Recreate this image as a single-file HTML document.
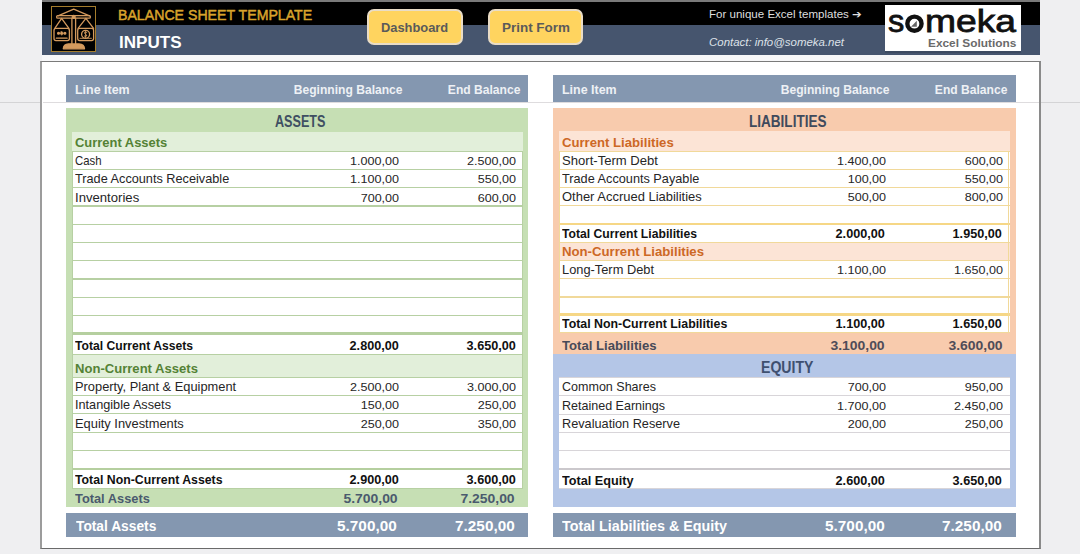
<!DOCTYPE html>
<html><head><meta charset="utf-8"><style>
html,body{margin:0;padding:0;}
body{width:1080px;height:554px;position:relative;overflow:hidden;background:#efeff1;font-family:"Liberation Sans", sans-serif;}
.t{position:absolute;white-space:pre;line-height:1;}
</style></head><body>
<div style="position:absolute;left:0.00px;top:101.50px;width:41.50px;height:1.00px;background:#d4d4d6;"></div>
<div style="position:absolute;left:1040.50px;top:101.50px;width:39.50px;height:1.00px;background:#d4d4d6;"></div>
<div style="position:absolute;left:41.50px;top:0.00px;width:998.50px;height:1.50px;background:#7a7a7a;"></div>
<div style="position:absolute;left:41.50px;top:1.50px;width:998.50px;height:23.70px;background:#000000;"></div>
<div style="position:absolute;left:41.50px;top:25.20px;width:998.50px;height:29.60px;background:#46556e;"></div>
<div style="position:absolute;left:41.50px;top:54.80px;width:998.50px;height:6.20px;background:#f7f7f8;"></div>
<div style="position:absolute;left:40.20px;top:61.00px;width:1001.30px;height:488.40px;background:#ffffff;border-left:2.5px solid #9c9c9c;border-right:2px solid #8a8a8a;border-top:1.5px solid #7a7a7a;border-bottom:1.8px solid #6a6a6a;box-sizing:border-box;"></div>
<div style="position:absolute;left:42.70px;top:101.60px;width:996.80px;height:1.20px;background:#dedcde;"></div>
<div style="position:absolute;left:50.5px;top:6px;width:45.5px;height:45.5px;box-sizing:border-box;border:1.3px solid #a57d2c;background:#000"></div>
<svg style="position:absolute;left:46px;top:2px" width="56" height="54" viewBox="0 0 56 54" fill="none" stroke="#d39a5e" stroke-width="1.3" stroke-linejoin="round" stroke-linecap="round">
<path d="M12 13.8 L27.7 7.2 L43.5 13.8"/>
<rect x="10.6" y="13.6" width="33.8" height="2.6" rx="1.2"/>
<circle cx="27.7" cy="14.9" r="1.5" fill="#d39a5e"/>
<path d="M25.9 16.5 L25.9 42 M29.6 16.5 L29.6 42"/>
<path d="M17.3 46.8 Q17.5 42.2 22.5 42 L33 42 Q38.3 42.2 38.5 46.8 Z" fill="#d39a5e"/>
<path d="M15.6 16.4 L8.8 26.4 M15.6 16.4 L22.9 26.4"/>
<path d="M39.9 16.4 L32.1 26.4 M39.9 16.4 L47.6 26.4"/>
<rect x="8" y="26.4" width="15.4" height="12.2" rx="2"/>
<rect x="31.7" y="26.4" width="15.9" height="12.2" rx="2"/>
<path d="M10.3 36.2 L21.1 36.2"/>
<circle cx="12.5" cy="31.3" r="0.9" fill="#d39a5e"/>
<circle cx="18.9" cy="31.3" r="0.9" fill="#d39a5e"/>
<path d="M15.7 29.3 L17.5 31.3 L15.7 33.3 L13.9 31.3 Z" fill="#d39a5e" stroke-width="0.6"/>
<circle cx="39.6" cy="32.3" r="4" />
<path d="M40.8 30.4 Q39.6 29.6 38.6 30.4 Q38 31.5 39.6 32.2 Q41.2 32.9 40.6 34 Q39.6 34.9 38.4 34.1 M39.6 29 L39.6 35.5" stroke-width="0.9"/>
<path d="M33.9 36.3 L45.4 36.3" stroke-width="0.9"/>
</svg>
<div class="t" style="left:118.30px;transform-origin:0 0;top:7.20px;font-size:15.3px;font-weight:400;font-style:normal;color:#d9a42c;transform:scaleX(0.9248);-webkit-text-stroke:0.5px #d9a42c;">BALANCE SHEET TEMPLATE</div>
<div class="t" style="left:119.20px;transform-origin:0 0;top:34.30px;font-size:17.2px;font-weight:700;font-style:normal;color:#ffffff;transform:scaleX(0.9916);">INPUTS</div>
<div style="position:absolute;left:366.9px;top:9.3px;width:96.0px;height:35.4px;box-sizing:border-box;border:2px solid #e9dcc6;border-radius:7px;background:#ffd45f"></div>
<div class="t" style="left:380.90px;transform-origin:0 0;top:21.30px;font-size:13px;font-weight:700;font-style:normal;color:#5a5a5a;transform:scaleX(0.9896);">Dashboard</div>
<div style="position:absolute;left:487.7px;top:9.3px;width:95.59999999999997px;height:35.4px;box-sizing:border-box;border:2px solid #e9dcc6;border-radius:7px;background:#ffd45f"></div>
<div class="t" style="left:501.50px;transform-origin:0 0;top:21.30px;font-size:13px;font-weight:700;font-style:normal;color:#5a5a5a;transform:scaleX(1.0345);">Print Form</div>
<div class="t" style="left:709.00px;transform-origin:0 0;top:9.10px;font-size:11px;font-weight:400;font-style:normal;color:#dedede;transform:scaleX(1.0491);">For unique Excel templates ➔</div>
<div class="t" style="left:709.00px;transform-origin:0 0;top:37.30px;font-size:11px;font-weight:400;font-style:italic;color:#dde1e8;transform:scaleX(1.0401);">Contact: info@someka.net</div>
<div style="position:absolute;left:885.30px;top:5.30px;width:135.50px;height:45.30px;background:#ffffff;"></div>
<div style="position:absolute;left:885.30px;top:50.60px;width:135.50px;height:2.90px;background:#3c4a60;"></div>
<div class="t" style="left:888.30px;transform-origin:0 0;top:6.30px;font-size:31px;font-weight:400;font-style:normal;color:#111111;transform:scaleX(1.0500);-webkit-text-stroke:0.8px #111;">s</div>
<svg style="position:absolute;left:903px;top:12px" width="24" height="24" viewBox="0 0 24 24"><circle cx="11.45" cy="11.7" r="7.1" fill="none" stroke="#111" stroke-width="4.4"/><path d="M8 14.8 L13.8 14.8 L13.8 8.8 Z" fill="#666"/></svg>
<div class="t" style="left:924.80px;transform-origin:0 0;top:6.30px;font-size:31px;font-weight:400;font-style:normal;color:#111111;transform:scaleX(1.2003);-webkit-text-stroke:0.8px #111;">meka</div>
<div class="t" style="left:928.20px;transform-origin:0 0;top:37.80px;font-size:11px;font-weight:700;font-style:normal;color:#6a6a6a;transform:scaleX(1.0779);">Excel Solutions</div>
<div style="position:absolute;left:66.00px;top:74.70px;width:462.00px;height:27.30px;background:#8497b0;"></div>
<div class="t" style="left:75.00px;transform-origin:0 0;top:83.80px;font-size:12.4px;font-weight:700;font-style:normal;color:#eef1f5;transform:scaleX(1.0057);">Line Item</div>
<div class="t" style="right:677.20px;transform-origin:100% 0;top:83.80px;font-size:12.4px;font-weight:700;font-style:normal;color:#eef1f5;transform:scaleX(0.9754);">Beginning Balance</div>
<div class="t" style="right:559.70px;transform-origin:100% 0;top:83.80px;font-size:12.4px;font-weight:700;font-style:normal;color:#eef1f5;transform:scaleX(0.9748);">End Balance</div>
<div style="position:absolute;left:553.00px;top:74.70px;width:463.00px;height:27.30px;background:#8497b0;"></div>
<div class="t" style="left:561.60px;transform-origin:0 0;top:83.80px;font-size:12.4px;font-weight:700;font-style:normal;color:#eef1f5;transform:scaleX(1.0057);">Line Item</div>
<div class="t" style="right:190.40px;transform-origin:100% 0;top:83.80px;font-size:12.4px;font-weight:700;font-style:normal;color:#eef1f5;transform:scaleX(0.9754);">Beginning Balance</div>
<div class="t" style="right:72.90px;transform-origin:100% 0;top:83.80px;font-size:12.4px;font-weight:700;font-style:normal;color:#eef1f5;transform:scaleX(0.9748);">End Balance</div>
<div style="position:absolute;left:66.00px;top:107.80px;width:462.00px;height:399.70px;background:#c6dfb4;"></div>
<div class="t" style="left:275.30px;transform-origin:0 0;top:112.90px;font-size:16.3px;font-weight:700;font-style:normal;color:#3f4f62;transform:scaleX(0.7751);">ASSETS</div>
<div style="position:absolute;left:71.70px;top:131.60px;width:451.10px;height:19.60px;background:#e2efda;"></div>
<div class="t" style="left:75.20px;transform-origin:0 0;top:136.50px;font-size:12.5px;font-weight:700;font-style:normal;color:#548235;transform:scaleX(1.0341);">Current Assets</div>
<div style="position:absolute;left:71.70px;top:151.20px;width:451.10px;height:203.10px;background:#ffffff;"></div>
<div style="position:absolute;left:71.70px;top:150.55px;width:451.10px;height:1.30px;background:#b7d0a3;"></div>
<div style="position:absolute;left:71.70px;top:168.80px;width:451.10px;height:1.30px;background:#b7d0a3;"></div>
<div style="position:absolute;left:71.70px;top:187.05px;width:451.10px;height:1.30px;background:#b7d0a3;"></div>
<div style="position:absolute;left:71.70px;top:205.30px;width:451.10px;height:1.30px;background:#b7d0a3;"></div>
<div style="position:absolute;left:71.70px;top:223.55px;width:451.10px;height:1.30px;background:#b7d0a3;"></div>
<div style="position:absolute;left:71.70px;top:241.80px;width:451.10px;height:1.30px;background:#b7d0a3;"></div>
<div style="position:absolute;left:71.70px;top:260.05px;width:451.10px;height:1.30px;background:#b7d0a3;"></div>
<div style="position:absolute;left:71.70px;top:278.30px;width:451.10px;height:1.30px;background:#b7d0a3;"></div>
<div style="position:absolute;left:71.70px;top:296.55px;width:451.10px;height:1.30px;background:#b7d0a3;"></div>
<div style="position:absolute;left:71.70px;top:314.80px;width:451.10px;height:1.30px;background:#b7d0a3;"></div>
<div style="position:absolute;left:71.70px;top:332.45px;width:451.10px;height:2.50px;background:#b5cf9f;"></div>
<div style="position:absolute;left:71.70px;top:353.65px;width:451.10px;height:1.30px;background:#b7d0a3;"></div>
<div style="position:absolute;left:71.70px;top:150.60px;width:451.10px;height:1.20px;background:#b7d0a3;"></div>
<div class="t" style="left:74.90px;transform-origin:0 0;top:155.05px;font-size:12.6px;font-weight:400;font-style:normal;color:#262626;transform:scaleX(0.9012);">Cash</div>
<div class="t" style="right:681.10px;transform-origin:100% 0;top:156.05px;font-size:11.8px;font-weight:400;font-style:normal;color:#262626;transform:scaleX(1.0650);">1.000,00</div>
<div class="t" style="right:564.30px;transform-origin:100% 0;top:156.05px;font-size:11.8px;font-weight:400;font-style:normal;color:#262626;transform:scaleX(1.0650);">2.500,00</div>
<div class="t" style="left:74.90px;transform-origin:0 0;top:173.30px;font-size:12.6px;font-weight:400;font-style:normal;color:#262626;transform:scaleX(1.0089);">Trade Accounts Receivable</div>
<div class="t" style="right:681.10px;transform-origin:100% 0;top:174.30px;font-size:11.8px;font-weight:400;font-style:normal;color:#262626;transform:scaleX(1.0650);">1.100,00</div>
<div class="t" style="right:564.30px;transform-origin:100% 0;top:174.30px;font-size:11.8px;font-weight:400;font-style:normal;color:#262626;transform:scaleX(1.0650);">550,00</div>
<div class="t" style="left:74.90px;transform-origin:0 0;top:191.55px;font-size:12.6px;font-weight:400;font-style:normal;color:#262626;transform:scaleX(1.0420);">Inventories</div>
<div class="t" style="right:681.10px;transform-origin:100% 0;top:192.55px;font-size:11.8px;font-weight:400;font-style:normal;color:#262626;transform:scaleX(1.0650);">700,00</div>
<div class="t" style="right:564.30px;transform-origin:100% 0;top:192.55px;font-size:11.8px;font-weight:400;font-style:normal;color:#262626;transform:scaleX(1.0650);">600,00</div>
<div class="t" style="left:74.90px;transform-origin:0 0;top:339.70px;font-size:12.3px;font-weight:700;font-style:normal;color:#111111;transform:scaleX(0.9868);">Total Current Assets</div>
<div class="t" style="right:681.50px;transform-origin:100% 0;top:339.70px;font-size:12.3px;font-weight:700;font-style:normal;color:#111111;transform:scaleX(1.0300);">2.800,00</div>
<div class="t" style="right:564.50px;transform-origin:100% 0;top:339.70px;font-size:12.3px;font-weight:700;font-style:normal;color:#111111;transform:scaleX(1.0300);">3.650,00</div>
<div style="position:absolute;left:71.70px;top:354.30px;width:451.10px;height:23.50px;background:#e2efda;"></div>
<div style="position:absolute;left:71.70px;top:353.70px;width:451.10px;height:1.20px;background:#b7d0a3;"></div>
<div class="t" style="left:75.20px;transform-origin:0 0;top:362.80px;font-size:12.5px;font-weight:700;font-style:normal;color:#548235;transform:scaleX(1.0458);">Non-Current Assets</div>
<div style="position:absolute;left:71.70px;top:377.80px;width:451.10px;height:110.40px;background:#ffffff;"></div>
<div style="position:absolute;left:71.70px;top:377.15px;width:451.10px;height:1.30px;background:#b7d0a3;"></div>
<div style="position:absolute;left:71.70px;top:394.65px;width:451.10px;height:1.30px;background:#b7d0a3;"></div>
<div style="position:absolute;left:71.70px;top:412.75px;width:451.10px;height:1.30px;background:#b7d0a3;"></div>
<div style="position:absolute;left:71.70px;top:431.75px;width:451.10px;height:1.30px;background:#b7d0a3;"></div>
<div style="position:absolute;left:71.70px;top:449.95px;width:451.10px;height:1.30px;background:#b7d0a3;"></div>
<div style="position:absolute;left:71.70px;top:467.55px;width:451.10px;height:2.50px;background:#b5cf9f;"></div>
<div style="position:absolute;left:71.70px;top:487.55px;width:451.10px;height:1.30px;background:#b7d0a3;"></div>
<div class="t" style="left:74.90px;transform-origin:0 0;top:380.90px;font-size:12.6px;font-weight:400;font-style:normal;color:#262626;transform:scaleX(1.0200);">Property, Plant & Equipment</div>
<div class="t" style="right:681.10px;transform-origin:100% 0;top:381.90px;font-size:11.8px;font-weight:400;font-style:normal;color:#262626;transform:scaleX(1.0650);">2.500,00</div>
<div class="t" style="right:564.30px;transform-origin:100% 0;top:381.90px;font-size:11.8px;font-weight:400;font-style:normal;color:#262626;transform:scaleX(1.0650);">3.000,00</div>
<div class="t" style="left:74.90px;transform-origin:0 0;top:399.00px;font-size:12.6px;font-weight:400;font-style:normal;color:#262626;transform:scaleX(1.0082);">Intangible Assets</div>
<div class="t" style="right:681.10px;transform-origin:100% 0;top:400.00px;font-size:11.8px;font-weight:400;font-style:normal;color:#262626;transform:scaleX(1.0650);">150,00</div>
<div class="t" style="right:564.30px;transform-origin:100% 0;top:400.00px;font-size:11.8px;font-weight:400;font-style:normal;color:#262626;transform:scaleX(1.0650);">250,00</div>
<div class="t" style="left:74.90px;transform-origin:0 0;top:418.00px;font-size:12.6px;font-weight:400;font-style:normal;color:#262626;transform:scaleX(1.0216);">Equity Investments</div>
<div class="t" style="right:681.10px;transform-origin:100% 0;top:419.00px;font-size:11.8px;font-weight:400;font-style:normal;color:#262626;transform:scaleX(1.0650);">250,00</div>
<div class="t" style="right:564.30px;transform-origin:100% 0;top:419.00px;font-size:11.8px;font-weight:400;font-style:normal;color:#262626;transform:scaleX(1.0650);">350,00</div>
<div class="t" style="left:74.90px;transform-origin:0 0;top:473.90px;font-size:12.3px;font-weight:700;font-style:normal;color:#111111;transform:scaleX(0.9995);">Total Non-Current Assets</div>
<div class="t" style="right:681.50px;transform-origin:100% 0;top:473.90px;font-size:12.3px;font-weight:700;font-style:normal;color:#111111;transform:scaleX(1.0300);">2.900,00</div>
<div class="t" style="right:564.50px;transform-origin:100% 0;top:473.90px;font-size:12.3px;font-weight:700;font-style:normal;color:#111111;transform:scaleX(1.0300);">3.600,00</div>
<div class="t" style="left:75.20px;transform-origin:0 0;top:491.90px;font-size:13px;font-weight:700;font-style:normal;color:#4a5a6e;transform:scaleX(0.9860);">Total Assets</div>
<div class="t" style="right:682.50px;transform-origin:100% 0;top:491.90px;font-size:13px;font-weight:700;font-style:normal;color:#4a5a6e;transform:scaleX(1.0700);">5.700,00</div>
<div class="t" style="right:565.00px;transform-origin:100% 0;top:491.90px;font-size:13px;font-weight:700;font-style:normal;color:#4a5a6e;transform:scaleX(1.0700);">7.250,00</div>
<div style="position:absolute;left:71.70px;top:151.20px;width:1.20px;height:337.00px;background:#b7d0a3;"></div>
<div style="position:absolute;left:521.60px;top:151.20px;width:1.20px;height:337.00px;background:#b7d0a3;"></div>
<div style="position:absolute;left:66.00px;top:512.80px;width:462.00px;height:24.40px;background:#8497b0;"></div>
<div class="t" style="left:75.60px;transform-origin:0 0;top:519.10px;font-size:14.3px;font-weight:700;font-style:normal;color:#ffffff;transform:scaleX(0.9626);">Total Assets</div>
<div class="t" style="right:683.20px;transform-origin:100% 0;top:519.10px;font-size:14.3px;font-weight:700;font-style:normal;color:#ffffff;transform:scaleX(1.0700);">5.700,00</div>
<div class="t" style="right:565.70px;transform-origin:100% 0;top:519.10px;font-size:14.3px;font-weight:700;font-style:normal;color:#ffffff;transform:scaleX(1.0700);">7.250,00</div>
<div style="position:absolute;left:553.00px;top:107.80px;width:463.00px;height:245.80px;background:#f8cbad;"></div>
<div class="t" style="left:748.80px;transform-origin:0 0;top:112.90px;font-size:16.3px;font-weight:700;font-style:normal;color:#3f4a5c;transform:scaleX(0.8318);">LIABILITIES</div>
<div style="position:absolute;left:559.00px;top:130.90px;width:450.50px;height:20.30px;background:#fce4d6;"></div>
<div class="t" style="left:561.80px;transform-origin:0 0;top:136.50px;font-size:12.5px;font-weight:700;font-style:normal;color:#cd6826;transform:scaleX(1.0510);">Current Liabilities</div>
<div style="position:absolute;left:559.00px;top:151.20px;width:450.50px;height:91.60px;background:#ffffff;"></div>
<div style="position:absolute;left:559.00px;top:150.55px;width:450.50px;height:1.30px;background:#f1d99a;"></div>
<div style="position:absolute;left:559.00px;top:168.80px;width:450.50px;height:1.30px;background:#f1d99a;"></div>
<div style="position:absolute;left:559.00px;top:187.05px;width:450.50px;height:1.30px;background:#f1d99a;"></div>
<div style="position:absolute;left:559.00px;top:204.95px;width:450.50px;height:1.30px;background:#f1d99a;"></div>
<div style="position:absolute;left:559.00px;top:222.75px;width:450.50px;height:2.50px;background:#f6d786;"></div>
<div style="position:absolute;left:559.00px;top:242.15px;width:450.50px;height:1.30px;background:#f1d99a;"></div>
<div class="t" style="left:561.60px;transform-origin:0 0;top:155.05px;font-size:12.6px;font-weight:400;font-style:normal;color:#262626;transform:scaleX(1.0391);">Short-Term Debt</div>
<div class="t" style="right:194.40px;transform-origin:100% 0;top:156.05px;font-size:11.8px;font-weight:400;font-style:normal;color:#262626;transform:scaleX(1.0650);">1.400,00</div>
<div class="t" style="right:77.00px;transform-origin:100% 0;top:156.05px;font-size:11.8px;font-weight:400;font-style:normal;color:#262626;transform:scaleX(1.0650);">600,00</div>
<div class="t" style="left:561.60px;transform-origin:0 0;top:173.30px;font-size:12.6px;font-weight:400;font-style:normal;color:#262626;transform:scaleX(1.0092);">Trade Accounts Payable</div>
<div class="t" style="right:194.40px;transform-origin:100% 0;top:174.30px;font-size:11.8px;font-weight:400;font-style:normal;color:#262626;transform:scaleX(1.0650);">100,00</div>
<div class="t" style="right:77.00px;transform-origin:100% 0;top:174.30px;font-size:11.8px;font-weight:400;font-style:normal;color:#262626;transform:scaleX(1.0650);">550,00</div>
<div class="t" style="left:561.60px;transform-origin:0 0;top:191.20px;font-size:12.6px;font-weight:400;font-style:normal;color:#262626;transform:scaleX(1.0294);">Other Accrued Liabilities</div>
<div class="t" style="right:194.40px;transform-origin:100% 0;top:192.20px;font-size:11.8px;font-weight:400;font-style:normal;color:#262626;transform:scaleX(1.0650);">500,00</div>
<div class="t" style="right:77.00px;transform-origin:100% 0;top:192.20px;font-size:11.8px;font-weight:400;font-style:normal;color:#262626;transform:scaleX(1.0650);">800,00</div>
<div class="t" style="left:561.60px;transform-origin:0 0;top:228.40px;font-size:12.3px;font-weight:700;font-style:normal;color:#111111;transform:scaleX(0.9896);">Total Current Liabilities</div>
<div class="t" style="right:195.10px;transform-origin:100% 0;top:228.40px;font-size:12.3px;font-weight:700;font-style:normal;color:#111111;transform:scaleX(1.0300);">2.000,00</div>
<div class="t" style="right:77.70px;transform-origin:100% 0;top:228.40px;font-size:12.3px;font-weight:700;font-style:normal;color:#111111;transform:scaleX(1.0300);">1.950,00</div>
<div style="position:absolute;left:559.00px;top:242.80px;width:450.50px;height:17.90px;background:#fce4d6;"></div>
<div style="position:absolute;left:559.00px;top:242.20px;width:450.50px;height:1.20px;background:#f1d99a;"></div>
<div class="t" style="left:561.80px;transform-origin:0 0;top:246.20px;font-size:12.5px;font-weight:700;font-style:normal;color:#cd6826;transform:scaleX(1.0539);">Non-Current Liabilities</div>
<div style="position:absolute;left:559.00px;top:260.70px;width:450.50px;height:71.70px;background:#ffffff;"></div>
<div style="position:absolute;left:559.00px;top:260.05px;width:450.50px;height:1.30px;background:#f1d99a;"></div>
<div style="position:absolute;left:559.00px;top:277.75px;width:450.50px;height:1.30px;background:#f1d99a;"></div>
<div style="position:absolute;left:559.00px;top:296.35px;width:450.50px;height:1.30px;background:#f1d99a;"></div>
<div style="position:absolute;left:559.00px;top:313.45px;width:450.50px;height:2.50px;background:#f6d786;"></div>
<div style="position:absolute;left:559.00px;top:331.75px;width:450.50px;height:1.30px;background:#f1d99a;"></div>
<div class="t" style="left:561.60px;transform-origin:0 0;top:264.00px;font-size:12.6px;font-weight:400;font-style:normal;color:#262626;transform:scaleX(1.0189);">Long-Term Debt</div>
<div class="t" style="right:194.40px;transform-origin:100% 0;top:265.00px;font-size:11.8px;font-weight:400;font-style:normal;color:#262626;transform:scaleX(1.0650);">1.100,00</div>
<div class="t" style="right:77.00px;transform-origin:100% 0;top:265.00px;font-size:11.8px;font-weight:400;font-style:normal;color:#262626;transform:scaleX(1.0650);">1.650,00</div>
<div class="t" style="left:561.60px;transform-origin:0 0;top:318.00px;font-size:12.3px;font-weight:700;font-style:normal;color:#111111;transform:scaleX(1.0053);">Total Non-Current Liabilities</div>
<div class="t" style="right:195.10px;transform-origin:100% 0;top:318.00px;font-size:12.3px;font-weight:700;font-style:normal;color:#111111;transform:scaleX(1.0300);">1.100,00</div>
<div class="t" style="right:77.70px;transform-origin:100% 0;top:318.00px;font-size:12.3px;font-weight:700;font-style:normal;color:#111111;transform:scaleX(1.0300);">1.650,00</div>
<div class="t" style="left:561.80px;transform-origin:0 0;top:338.50px;font-size:13px;font-weight:700;font-style:normal;color:#474a58;transform:scaleX(1.0088);">Total Liabilities</div>
<div class="t" style="right:195.10px;transform-origin:100% 0;top:338.50px;font-size:13px;font-weight:700;font-style:normal;color:#4f4c58;transform:scaleX(1.0700);">3.100,00</div>
<div class="t" style="right:77.70px;transform-origin:100% 0;top:338.50px;font-size:13px;font-weight:700;font-style:normal;color:#4f4c58;transform:scaleX(1.0700);">3.600,00</div>
<div style="position:absolute;left:559.00px;top:151.20px;width:1.20px;height:181.20px;background:#f1d99a;"></div>
<div style="position:absolute;left:1008.30px;top:151.20px;width:1.20px;height:181.20px;background:#f1d99a;"></div>
<div style="position:absolute;left:553.00px;top:353.60px;width:463.00px;height:153.90px;background:#b4c6e7;"></div>
<div class="t" style="left:760.80px;transform-origin:0 0;top:358.90px;font-size:16.3px;font-weight:700;font-style:normal;color:#3f5070;transform:scaleX(0.8660);">EQUITY</div>
<div style="position:absolute;left:559.00px;top:377.90px;width:450.50px;height:110.90px;background:#ffffff;"></div>
<div style="position:absolute;left:559.00px;top:377.25px;width:450.50px;height:1.30px;background:#d8d5d9;"></div>
<div style="position:absolute;left:559.00px;top:394.95px;width:450.50px;height:1.30px;background:#d8d5d9;"></div>
<div style="position:absolute;left:559.00px;top:413.75px;width:450.50px;height:1.30px;background:#d8d5d9;"></div>
<div style="position:absolute;left:559.00px;top:432.15px;width:450.50px;height:1.30px;background:#d8d5d9;"></div>
<div style="position:absolute;left:559.00px;top:450.05px;width:450.50px;height:1.30px;background:#d8d5d9;"></div>
<div style="position:absolute;left:559.00px;top:467.55px;width:450.50px;height:2.50px;background:#cbc8cc;"></div>
<div style="position:absolute;left:559.00px;top:488.15px;width:450.50px;height:1.30px;background:#d8d5d9;"></div>
<div style="position:absolute;left:559.00px;top:377.90px;width:450.50px;height:0.60px;background:#ffffff;"></div>
<div class="t" style="left:561.60px;transform-origin:0 0;top:381.20px;font-size:12.6px;font-weight:400;font-style:normal;color:#262626;transform:scaleX(0.9947);">Common Shares</div>
<div class="t" style="right:194.40px;transform-origin:100% 0;top:382.20px;font-size:11.8px;font-weight:400;font-style:normal;color:#262626;transform:scaleX(1.0650);">700,00</div>
<div class="t" style="right:77.00px;transform-origin:100% 0;top:382.20px;font-size:11.8px;font-weight:400;font-style:normal;color:#262626;transform:scaleX(1.0650);">950,00</div>
<div class="t" style="left:561.60px;transform-origin:0 0;top:400.00px;font-size:12.6px;font-weight:400;font-style:normal;color:#262626;transform:scaleX(0.9940);">Retained Earnings</div>
<div class="t" style="right:194.40px;transform-origin:100% 0;top:401.00px;font-size:11.8px;font-weight:400;font-style:normal;color:#262626;transform:scaleX(1.0650);">1.700,00</div>
<div class="t" style="right:77.00px;transform-origin:100% 0;top:401.00px;font-size:11.8px;font-weight:400;font-style:normal;color:#262626;transform:scaleX(1.0650);">2.450,00</div>
<div class="t" style="left:561.60px;transform-origin:0 0;top:418.40px;font-size:12.6px;font-weight:400;font-style:normal;color:#262626;transform:scaleX(1.0094);">Revaluation Reserve</div>
<div class="t" style="right:194.40px;transform-origin:100% 0;top:419.40px;font-size:11.8px;font-weight:400;font-style:normal;color:#262626;transform:scaleX(1.0650);">200,00</div>
<div class="t" style="right:77.00px;transform-origin:100% 0;top:419.40px;font-size:11.8px;font-weight:400;font-style:normal;color:#262626;transform:scaleX(1.0650);">250,00</div>
<div class="t" style="left:561.60px;transform-origin:0 0;top:474.60px;font-size:12.3px;font-weight:700;font-style:normal;color:#111111;transform:scaleX(1.0295);">Total Equity</div>
<div class="t" style="right:195.10px;transform-origin:100% 0;top:474.60px;font-size:12.3px;font-weight:700;font-style:normal;color:#111111;transform:scaleX(1.0300);">2.600,00</div>
<div class="t" style="right:77.70px;transform-origin:100% 0;top:474.60px;font-size:12.3px;font-weight:700;font-style:normal;color:#111111;transform:scaleX(1.0300);">3.650,00</div>
<div style="position:absolute;left:553.00px;top:512.90px;width:463.00px;height:24.30px;background:#8497b0;"></div>
<div class="t" style="left:562.00px;transform-origin:0 0;top:519.10px;font-size:14.3px;font-weight:700;font-style:normal;color:#ffffff;transform:scaleX(1.0002);">Total Liabilities &amp; Equity</div>
<div class="t" style="right:195.70px;transform-origin:100% 0;top:519.10px;font-size:14.3px;font-weight:700;font-style:normal;color:#ffffff;transform:scaleX(1.0700);">5.700,00</div>
<div class="t" style="right:78.00px;transform-origin:100% 0;top:519.10px;font-size:14.3px;font-weight:700;font-style:normal;color:#ffffff;transform:scaleX(1.0700);">7.250,00</div>
</body></html>
